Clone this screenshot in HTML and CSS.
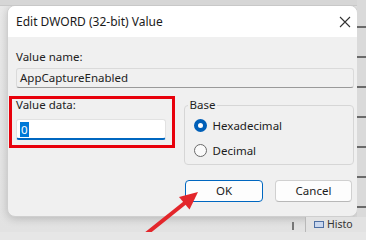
FILE: index.html
```html
<!DOCTYPE html>
<html>
<head>
<meta charset="utf-8">
<link rel="stylesheet" href="styles.css">
</head>
<body>
<div class="desk">
  <div class="behind-top"></div>
  <div class="behind-right"></div>
  <div class="behind-panel">
    <div class="panel-row"><span class="panel-icon"></span><span class="panel-text">Histo</span></div>
    <div class="panel-row"><span class="panel-icon"></span></div>
  </div>
  <div class="behind-tick"></div>

  <div class="dialog">
    <div class="titlebar">
      <span class="title">Edit DWORD (32-bit) Value</span>
      <svg class="close" width="12" height="12" viewBox="0 0 12 12"><path d="M1 1 L11 11 M11 1 L1 11" stroke="#333" stroke-width="1.1" fill="none"/></svg>
    </div>
    <div class="content">
      <div class="label">Value name:</div>
      <div class="namefield">AppCaptureEnabled</div>
      <div class="row">
        <div class="datacol">
          <div class="label">Value data:</div>
          <div class="datafield"><span class="sel">0</span></div>
        </div>
        <fieldset class="group">
          <legend>Base</legend>
          <div class="radio"><span class="dot on"></span><span>Hexadecimal</span></div>
          <div class="radio"><span class="dot"></span><span>Decimal</span></div>
        </fieldset>
      </div>
      <div class="buttons">
        <div class="btn primary">OK</div>
        <div class="btn">Cancel</div>
      </div>
    </div>
  </div>

  <div class="highlight"></div>
  <svg class="arrow" width="366" height="232" viewBox="0 0 366 232">
    <line x1="146" y1="234" x2="186" y2="202" stroke="#e3262b" stroke-width="4"/>
    <polygon points="198,192 189.5,209.5 179,197" fill="#e3262b"/>
  </svg>
</div>
</body>
</html>
```

FILE: styles.css
```css
* { box-sizing: border-box; }
html, body { margin: 0; padding: 0; }
body {
  background: #e6e6e6;
  font-family: "Noto Sans", "Open Sans", "DejaVu Sans", sans-serif;
  font-size: 11.5px;
  color: #1b1b1b;
}
.desk {
  position: relative;
  width: 366px;
  height: 232px;
  overflow: hidden;
  background: linear-gradient(#e9e9e9, #e2e2e2);
  padding-top: 5px;
  padding-left: 7px;
}
.behind-top {
  position: absolute;
  left: 0; top: 0;
  width: 366px; height: 6px;
  background: #d6d6d6;
  border-bottom: 1px solid #c8c8c8;
}
.behind-right {
  position: absolute;
  right: 0; top: 0;
  width: 9px; height: 232px;
  background: repeating-linear-gradient(#dadada 0 26px, #6a6a6a 26px 28px, #dadada 28px 30px);
}
.behind-panel {
  position: absolute;
  left: 305px; top: 217px;
  width: 61px; height: 15px;
  background: #e2e2e2;
  border-left: 1px solid #b8b8b8;
  padding: 2px 0 0 8px;
}
.panel-row { display: flex; align-items: center; gap: 3px; height: 11px; }
.panel-icon {
  display: inline-block;
  width: 10px; height: 7px;
  border: 1px solid #4d6fa3;
  background: #c9d7ee;
}
.panel-text { font-size: 10.5px; line-height: 11px; color: #333; }
.behind-tick {
  position: absolute;
  left: 292px; top: 222px;
  width: 2px; height: 8px;
  background: #777;
}
.dialog {
  width: 351px;
  height: 212px;
  background: #f0f0f0;
  border-radius: 8px;
  border: 1px solid #cfcfcf;
  box-shadow: 0 2px 8px rgba(0,0,0,0.18);
  overflow: hidden;
}
.titlebar {
  height: 31px;
  background: #ffffff;
  display: flex;
  align-items: center;
  justify-content: space-between;
  padding: 0 5px 0 8px;
}
.title { font-size: 12px; color: #1a1a1a; }
.close { margin-right: 1px; }
.content {
  padding: 13px 3px 0 8px;
}
.label { height: 14px; line-height: 14px; color: #222; }
.namefield {
  margin-top: 4px;
  height: 20px;
  line-height: 18px;
  padding-left: 3px;
  background: #f0f0f0;
  border: 1px solid #dadada;
  border-bottom-color: #9a9a9a;
  border-radius: 3px;
  color: #222;
}
.row {
  display: flex;
  margin-top: 10px;
  gap: 18px;
}
.datacol { width: 150px; }
.datafield {
  margin-top: 7px;
  height: 21px;
  background: #fff;
  border: 1px solid #e2e2e2;
  border-bottom: 2px solid #0067c0;
  border-radius: 3px;
  padding: 2px 0 0 3px;
}
.sel {
  display: inline-block;
  height: 15px;
  line-height: 15px;
  padding: 0 1px;
  background: #0078d7;
  color: #fff;
}
.group {
  margin: 0;
  width: 171px;
  height: 67px;
  border: 1px solid #d6d6d6;
  border-radius: 4px;
  padding: 1px 0 0 9px;
}
.group legend {
  padding: 0 2px;
  margin-left: -6px;
  line-height: 14px;
  color: #222;
}
.radio {
  display: flex;
  align-items: center;
  gap: 6px;
  height: 25px;
}
.dot {
  width: 13px; height: 13px;
  border-radius: 50%;
  border: 1px solid #6a6a6a;
  background: #fafafa;
}
.dot.on {
  border: 4px solid #005fb8;
  background: #fff;
}
.buttons {
  display: flex;
  justify-content: flex-end;
  gap: 12px;
  margin-top: 15px;
  padding-right: 2px;
}
.btn {
  width: 77px;
  height: 22px;
  line-height: 20px;
  text-align: center;
  background: #fdfdfd;
  border: 1px solid #d0d0d0;
  border-bottom-color: #b8b8b8;
  border-radius: 4px;
  color: #1b1b1b;
}
.btn.primary {
  width: 78px;
  border: 1px solid #0067c0;
}
.highlight {
  position: absolute;
  left: 9px; top: 96px;
  width: 166px; height: 52px;
  border: 3px solid #e8000b;
}
.arrow {
  position: absolute;
  left: 0; top: 0;
}
```
